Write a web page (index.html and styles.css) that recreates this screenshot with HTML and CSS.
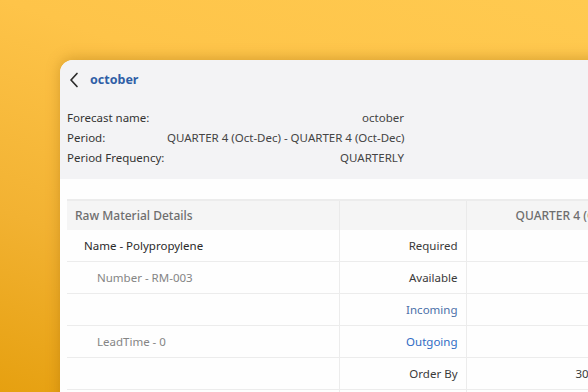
FILE: index.html
```html
<!DOCTYPE html>
<html>
<head>
<meta charset="utf-8">
<link rel="stylesheet" href="styles.css">
</head>
<body>
<div class="card">
  <div class="top">
    <div class="header">
      <svg class="back" width="10" height="16" viewBox="0 0 10 16"><polyline points="8,1.5 2,8 8,14.5" fill="none" stroke="#2b2b2b" stroke-width="1.7" stroke-linecap="round" stroke-linejoin="round"/></svg>
      <span class="title">october</span>
    </div>
    <div class="info">
      <span class="lbl">Forecast name:</span><span class="val">october</span>
      <span class="lbl">Period:</span><span class="val">QUARTER 4 (Oct-Dec) - QUARTER 4 (Oct-Dec)</span>
      <span class="lbl">Period Frequency:</span><span class="val">QUARTERLY</span>
    </div>
  </div>
  <div class="tablewrap">
    <table class="grid">
      <colgroup><col class="c1"><col class="c2"><col class="c3"></colgroup>
      <thead>
        <tr><th class="h1">Raw Material Details</th><th></th><th class="h3">QUARTER 4 (Oct-Dec)</th></tr>
      </thead>
      <tbody>
        <tr><td class="name">Name - Polypropylene</td><td class="kind">Required</td><td></td></tr>
        <tr><td class="sub">Number - RM-003</td><td class="kind">Available</td><td></td></tr>
        <tr><td></td><td class="kind inc">Incoming</td><td></td></tr>
        <tr><td class="sub">LeadTime - 0</td><td class="kind out">Outgoing</td><td></td></tr>
        <tr><td></td><td class="kind">Order By</td><td class="num">30/09/2024</td></tr>
        <tr><td></td><td class="kind">Order Qty</td><td></td></tr>
      </tbody>
    </table>
  </div>
</div>
</body>
</html>
```

FILE: styles.css
```css
html, body {
  margin: 0;
  padding: 0;
  width: 588px;
  height: 392px;
  overflow: hidden;
}
body {
  background: linear-gradient(200deg, #ffca50 0%, #fec449 35%, #f2b232 70%, #e6a010 100%);
  font-family: "Noto Sans", "Open Sans", sans-serif;
  font-size: 11.5px;
  color: #333;
}
.card {
  margin: 60px 0 0 60px;
  width: 660px;
  height: 400px;
  background: #fefefe;
  border-radius: 13px 0 0 0;
  box-shadow: 0 -2px 14px rgba(150, 95, 0, 0.35);
  overflow: hidden;
}
.top {
  background: #f3f3f5;
  padding: 0 0 12px 7px;
}
.header {
  height: 40px;
  display: flex;
  align-items: center;
}
.back {
  margin-left: 2px;
  margin-right: 11px;
}
.title {
  color: #2f5ea6;
  font-weight: 700;
  font-size: 12.5px;
  padding-bottom: 1px;
}
.info {
  margin-top: 7px;
  display: grid;
  grid-template-columns: 100px 237px;
  grid-auto-rows: 20px;
  align-items: center;
  color: #333;
}
.lbl {
  white-space: nowrap;
}
.val {
  text-align: right;
  white-space: nowrap;
  color: #444;
}
.tablewrap {
  padding: 20px 0 0 7px;
}
.grid {
  border-collapse: collapse;
  table-layout: fixed;
  width: 620px;
}
.c1 { width: 272px; }
.c2 { width: 127px; }
.c3 { width: 221px; }
.grid th {
  height: 29px;
  background: #f5f5f5;
  border-top: 2px solid #ececec;
  border-right: 1px solid #eaeaea;
  font-weight: 500;
  color: #6e6e6e;
  font-size: 12px;
  padding: 0;
}
.grid th.h1 {
  text-align: left;
  padding-left: 8px;
}
.grid th.h3 {
  text-align: left;
  padding-left: 49px;
}
.grid td {
  height: 31px;
  border-bottom: 1px solid #ececec;
  border-right: 1px solid #ececec;
  padding: 0;
  white-space: nowrap;
}
.grid td.name {
  padding-left: 17px;
  color: #2a2a2a;
}
.grid td.sub {
  padding-left: 30px;
  color: #858585;
}
.grid td.kind {
  text-align: right;
  padding-right: 8px;
  color: #3a3a3a;
}
.grid td.inc { color: #4a6fa8; }
.grid td.out { color: #2f6cc4; }
.grid td.num {
  padding-left: 109px;
  color: #3a3a3a;
}
```
